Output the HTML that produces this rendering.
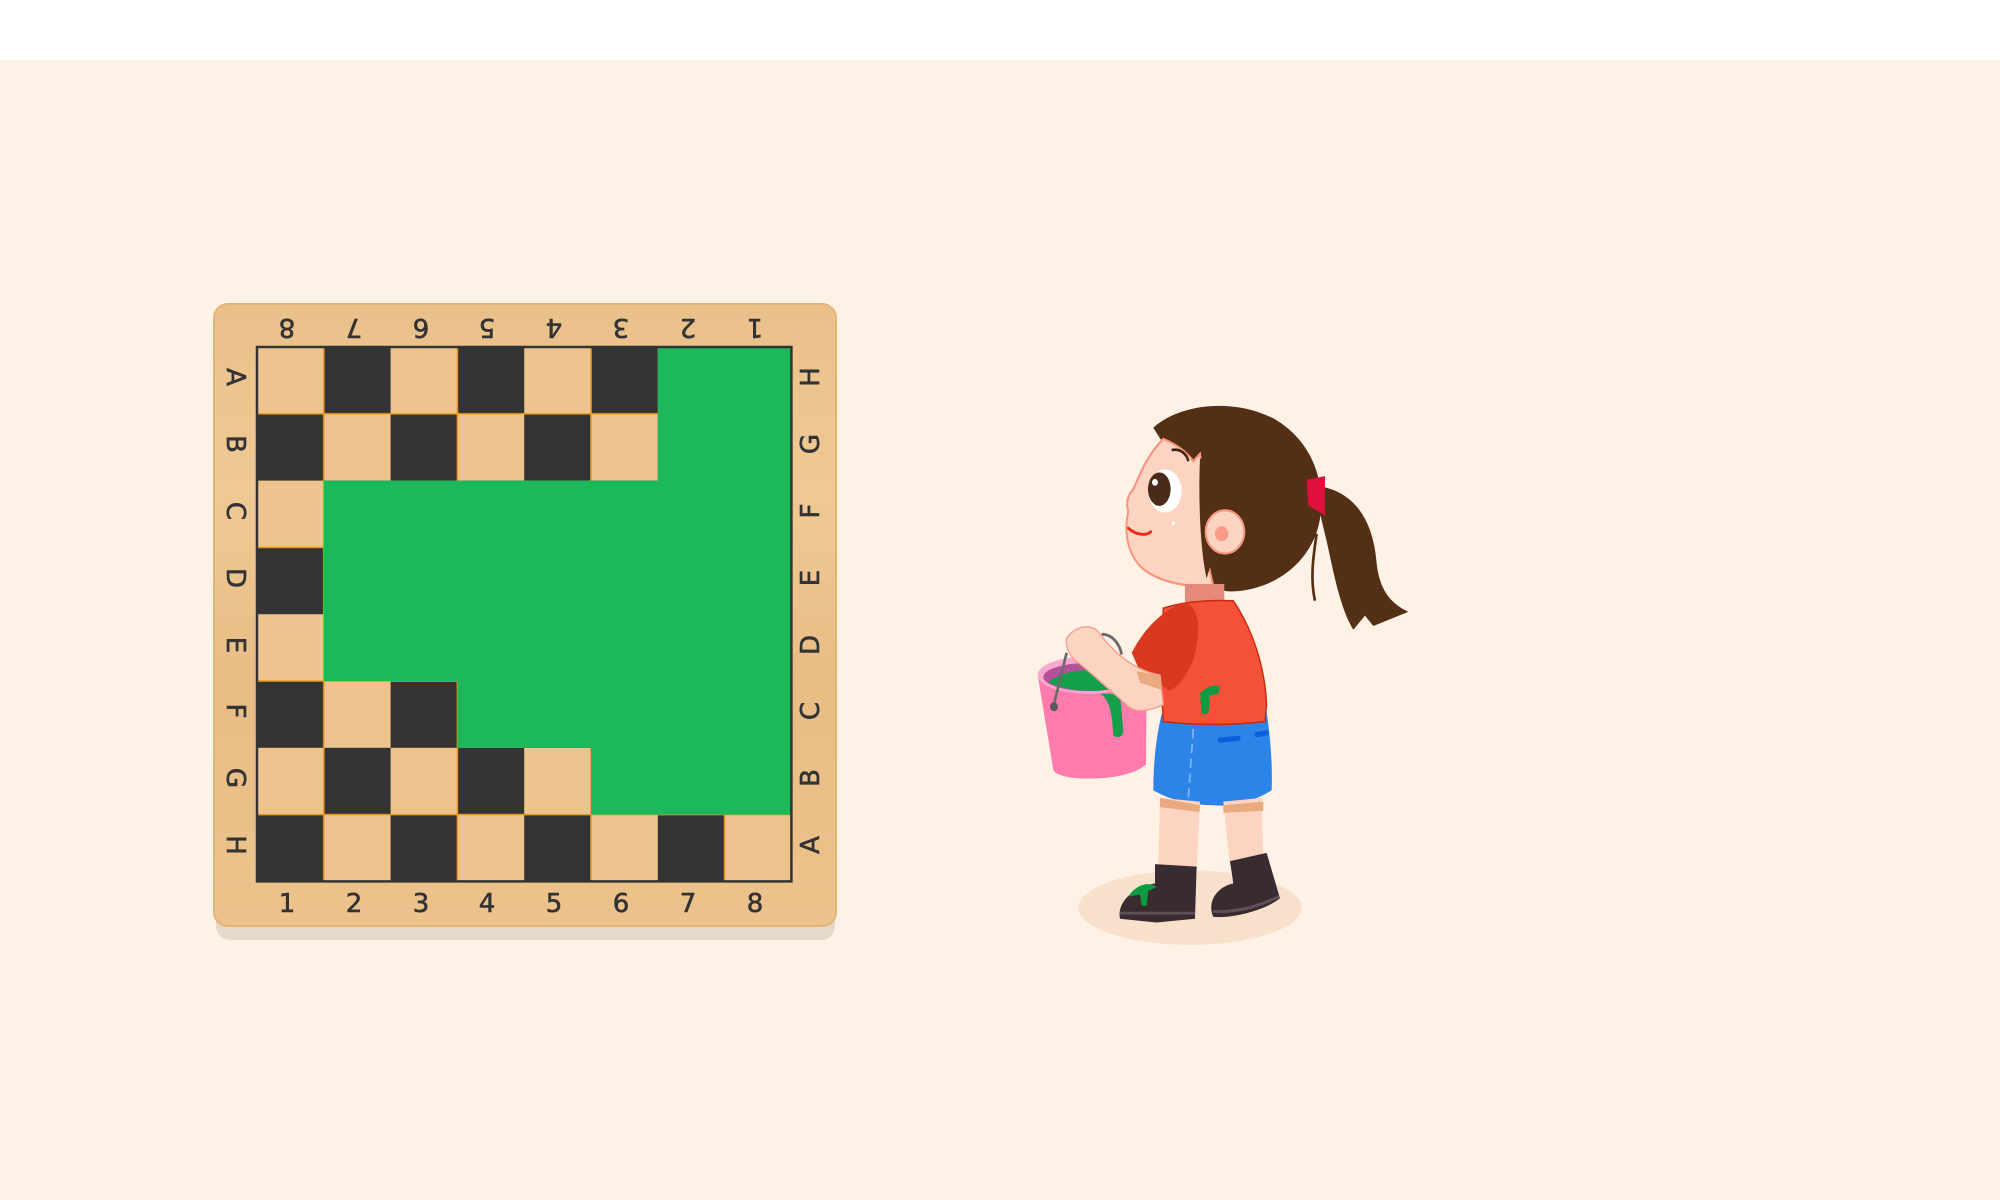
<!DOCTYPE html>
<html><head><meta charset="utf-8"><style>
html,body{margin:0;padding:0;width:2000px;height:1200px;overflow:hidden;background:#fff;}
#bg{position:absolute;left:0;top:60px;width:2000px;height:1140px;background:#fef1e5;}
svg{position:absolute;left:0;top:0;}
text{font-family:"DejaVu Sans","Liberation Sans",sans-serif;font-size:26px;fill:#333;stroke:#333;stroke-width:0.6;}
</style></head><body>
<div id="bg"></div>
<svg width="2000" height="1200" viewBox="0 0 2000 1200">
<defs>
<pattern id="chk" x="257" y="347" width="133.6" height="133.6" patternUnits="userSpaceOnUse">
<rect width="133.6" height="133.6" fill="#eec48e"/>
<rect x="66.8" y="0" width="66.8" height="66.8" fill="#333333"/>
<rect x="0" y="66.8" width="66.8" height="66.8" fill="#333333"/>
<path d="M0 66.8H133.6M66.8 0V133.6" stroke="#ef9a20" stroke-width="1.5"/>
</pattern>
<linearGradient id="wood" x1="0" y1="0" x2="0" y2="1">
<stop offset="0" stop-color="#eac08a"/><stop offset="0.3" stop-color="#efc995"/><stop offset="0.6" stop-color="#e8bd85"/><stop offset="1" stop-color="#ecc38c"/>
</linearGradient>
</defs>
<rect x="216" y="316" width="619" height="624" rx="14" fill="#e6d9cc"/>
<rect x="214" y="304" width="622" height="622" rx="14" fill="url(#wood)" stroke="#e3b473" stroke-width="2"/>
<rect x="257" y="347" width="534.4" height="534.4" fill="url(#chk)"/>
<polygon points="657.8,347 791.4,347 791.4,814.6 591,814.6 591,747.8 457.4,747.8 457.4,681 323.8,681 323.8,480.6 657.8,480.6" fill="#1db85a"/>
<rect x="257" y="347" width="534.4" height="534.4" fill="none" stroke="#333" stroke-width="2.5"/>
<g text-anchor="middle">
<text transform="translate(287,329) rotate(180)" dy="10">8</text>
<text transform="translate(354,329) rotate(180)" dy="10">7</text>
<text transform="translate(421,329) rotate(180)" dy="10">6</text>
<text transform="translate(487,329) rotate(180)" dy="10">5</text>
<text transform="translate(554,329) rotate(180)" dy="10">4</text>
<text transform="translate(621,329) rotate(180)" dy="10">3</text>
<text transform="translate(688,329) rotate(180)" dy="10">2</text>
<text transform="translate(755,329) rotate(180)" dy="10">1</text>
<text x="287" y="912">1</text><text x="354" y="912">2</text><text x="421" y="912">3</text><text x="487" y="912">4</text>
<text x="554" y="912">5</text><text x="621" y="912">6</text><text x="688" y="912">7</text><text x="755" y="912">8</text>
<text transform="translate(237,377) rotate(90)" dy="10">A</text>
<text transform="translate(237,444) rotate(90)" dy="10">B</text>
<text transform="translate(237,511) rotate(90)" dy="10">C</text>
<text transform="translate(237,578) rotate(90)" dy="10">D</text>
<text transform="translate(237,645) rotate(90)" dy="10">E</text>
<text transform="translate(237,711) rotate(90)" dy="10">F</text>
<text transform="translate(237,778) rotate(90)" dy="10">G</text>
<text transform="translate(237,845) rotate(90)" dy="10">H</text>
<text transform="translate(809,377) rotate(-90)" dy="10">H</text>
<text transform="translate(809,444) rotate(-90)" dy="10">G</text>
<text transform="translate(809,511) rotate(-90)" dy="10">F</text>
<text transform="translate(809,578) rotate(-90)" dy="10">E</text>
<text transform="translate(809,645) rotate(-90)" dy="10">D</text>
<text transform="translate(809,711) rotate(-90)" dy="10">C</text>
<text transform="translate(809,778) rotate(-90)" dy="10">B</text>
<text transform="translate(809,845) rotate(-90)" dy="10">A</text>
</g>
<g transform="translate(1000,377.5) scale(0.3333,0.372)">
<ellipse cx="570" cy="1425" rx="335" ry="100" fill="#f9e0cb"/>
<path d="M940 290 C1060 300 1120 380 1130 500 C1140 580 1180 610 1225 630 L1120 668 L1095 640 L1060 678 C1020 620 1000 520 980 440 Z" fill="#532f15"/>
<path d="M950 420 C940 480 930 540 945 600" stroke="#532f15" stroke-width="8" fill="none"/>
<path d="M460 135 C540 70 700 55 820 110 C920 160 980 260 960 380 C940 490 830 570 700 575 C640 578 600 540 590 450 C580 300 520 220 460 135 Z" fill="#532f15"/>
<path d="M490 165 C440 210 420 260 400 300 C380 320 378 340 385 360 C370 420 385 480 430 515 C480 550 560 565 640 560 C615 470 600 380 615 300 L600 205 L580 225 C560 200 530 180 490 165 Z" fill="#fdd4c1" stroke="#f7957f" stroke-width="6"/>
<path d="M615 210 C640 300 630 400 640 480 L620 540 C600 460 595 320 600 220 Z" fill="#532f15"/>
<circle cx="675" cy="415" r="58" fill="#fdd4c1" stroke="#f7957f" stroke-width="6"/>
<circle cx="665" cy="420" r="20" fill="#f99b88"/>
<ellipse cx="495" cy="305" rx="50" ry="58" fill="#fff"/>
<ellipse cx="478" cy="300" rx="34" ry="45" fill="#4a2a18"/>
<circle cx="465" cy="282" r="9" fill="#fff"/>
<path d="M515 195 C540 190 560 205 565 225" stroke="#3a2010" stroke-width="7" fill="none"/>
<path d="M385 405 C410 425 440 425 452 415" stroke="#ee2a1a" stroke-width="8" fill="none" stroke-linecap="round"/>
<circle cx="520" cy="392" r="5" fill="#fff"/>
<path d="M920 275 L975 265 L975 370 L925 345 Z" fill="#e0103e"/>
<rect x="555" y="555" width="118" height="50" fill="#e58a7b"/>
<path d="M485 905 L800 900 C812 970 818 1050 815 1110 C760 1140 700 1155 640 1150 C560 1150 500 1130 460 1110 C460 1030 470 960 485 905 Z" fill="#2d84e8"/>
<path d="M580 945 L565 1130" stroke="#7fb7f5" stroke-width="5" stroke-dasharray="25 15"/>
<path d="M660 975 L715 970 M770 960 L800 955" stroke="#0d5fd9" stroke-width="14" stroke-linecap="round"/>
<path d="M480 1130 L600 1140 L590 1320 L475 1320 Z" fill="#fdd4c1"/>
<path d="M670 1140 L785 1130 L790 1300 L690 1310 Z" fill="#fdd4c1"/>
<path d="M480 1130 L600 1150 L598 1168 L480 1155 Z" fill="#eaaa80"/>
<path d="M670 1150 L790 1140 L790 1165 L670 1170 Z" fill="#eaaa80"/>
<path d="M465 1308 L590 1315 L585 1455 L470 1465 L360 1455 C350 1410 400 1370 465 1360 Z" fill="#382c30"/>
<path d="M360 1440 L585 1440" stroke="#5d5058" stroke-width="8"/>
<path d="M690 1300 L800 1278 L840 1400 C800 1430 700 1455 640 1450 C620 1410 650 1370 700 1360 Z" fill="#382c30"/>
<path d="M640 1435 C720 1440 790 1415 838 1395" stroke="#5d5058" stroke-width="8" fill="none"/>
<path d="M385 1395 C410 1360 450 1355 470 1370 L445 1380 L440 1420 L425 1420 L420 1390 Z" fill="#0d9a40"/>
<path d="M490 620 C560 600 640 598 700 600 C760 680 795 780 800 880 L795 925 C700 935 580 935 490 925 L480 780 Z" fill="#f55139" stroke="#c62a10" stroke-width="4"/>
<path d="M395 740 C430 680 480 630 550 605 C600 610 605 680 580 760 C560 800 530 840 505 840 L420 790 Z" fill="#d9391f"/>
<path d="M600 850 C620 830 640 825 660 830 L655 850 L630 855 L625 905 L605 905 Z" fill="#0d9a40"/>
<path d="M115 810 L440 790 L438 1040 C400 1070 330 1078 260 1078 C210 1078 170 1070 160 1055 Z" fill="#ff7aad"/>
<ellipse cx="265" cy="800" rx="152" ry="50" fill="#f9a9cf"/>
<ellipse cx="268" cy="805" rx="138" ry="38" fill="#b5509b"/>
<path d="M145 820 C180 790 260 775 380 795 L400 820 C320 850 220 850 145 820 Z" fill="#14a04a"/>
<path d="M300 850 C320 860 335 880 340 960 C345 970 370 970 370 950 L360 850 Z" fill="#14a04a"/>
<path d="M160 885 L200 740 M305 690 C340 690 360 720 365 745" stroke="#6b6b6b" stroke-width="8" fill="none"/>
<circle cx="162" cy="885" r="12" fill="#5a5a5a"/>
<path d="M200 700 C230 665 280 660 300 690 C360 760 420 790 480 800 L490 880 C440 900 400 900 380 880 C330 840 280 800 240 770 C205 750 195 720 200 700 Z" fill="#fdd4c1" stroke="#f7a090" stroke-width="4"/>
<path d="M410 790 L480 800 L485 840 L420 820 Z" fill="#eaaa80"/>
</g>
</svg>
</body></html>
